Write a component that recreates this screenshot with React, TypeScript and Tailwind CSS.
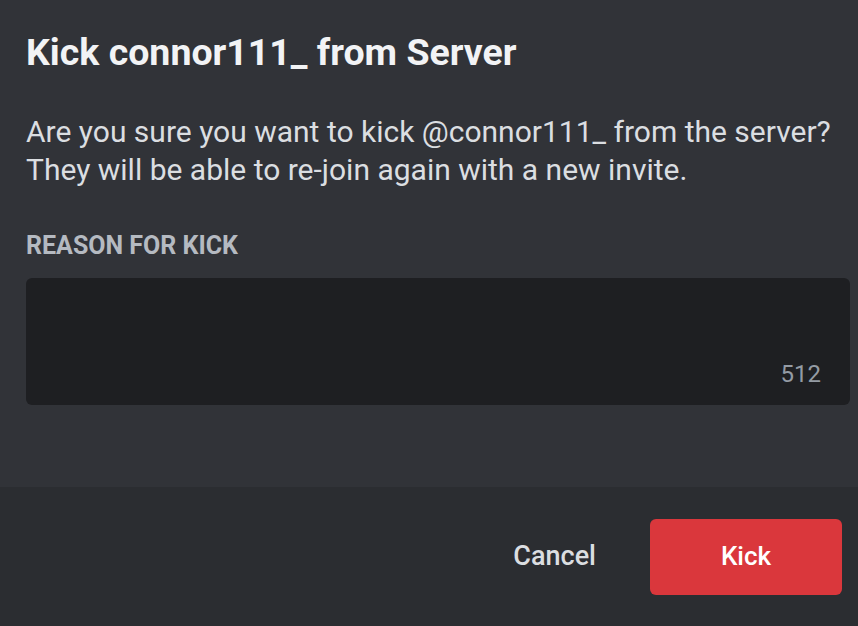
export default function App() {
  return (
    <div
      className="flex h-[626px] w-[858px] flex-col overflow-hidden bg-[#313338]"
      style={{ fontFamily: 'Roboto, "Noto Sans", sans-serif' }}
    >
      {/* body */}
      <div className="flex flex-1 flex-col pl-[26px] pr-[8px] pt-[26px]">
        <h1 className="text-[37.5px] font-bold leading-[52px] text-[#f2f3f5]">
          Kick connor111_ from Server
        </h1>
        <p className="mt-[35px] text-[30px] leading-[38px] text-[#dbdee1]">
          Are you sure you want to kick @connor111_ from the server?
          <br />
          They will be able to re-join again with a new invite.
        </p>
        <label className="mt-[44px] text-[25px] font-bold uppercase leading-[26px] text-[#b5bac1]">
          Reason for Kick
        </label>
        <div className="mt-[19px] flex h-[127px] items-end justify-end rounded-[6px] bg-[#1e1f22] pb-[18px] pr-[29px]">
          <span className="text-[24px] leading-[26px] text-[#949ba4]">512</span>
        </div>
      </div>

      {/* footer */}
      <div className="flex h-[139px] items-center justify-end gap-[54px] bg-[#2b2d31] pr-[16px]">
        <button className="text-[27px] font-medium text-[#dbdee1]">Cancel</button>
        <button className="h-[76px] w-[192px] rounded-[6px] bg-[#da373c] text-[26px] font-medium text-white">
          Kick
        </button>
      </div>
    </div>
  );
}
